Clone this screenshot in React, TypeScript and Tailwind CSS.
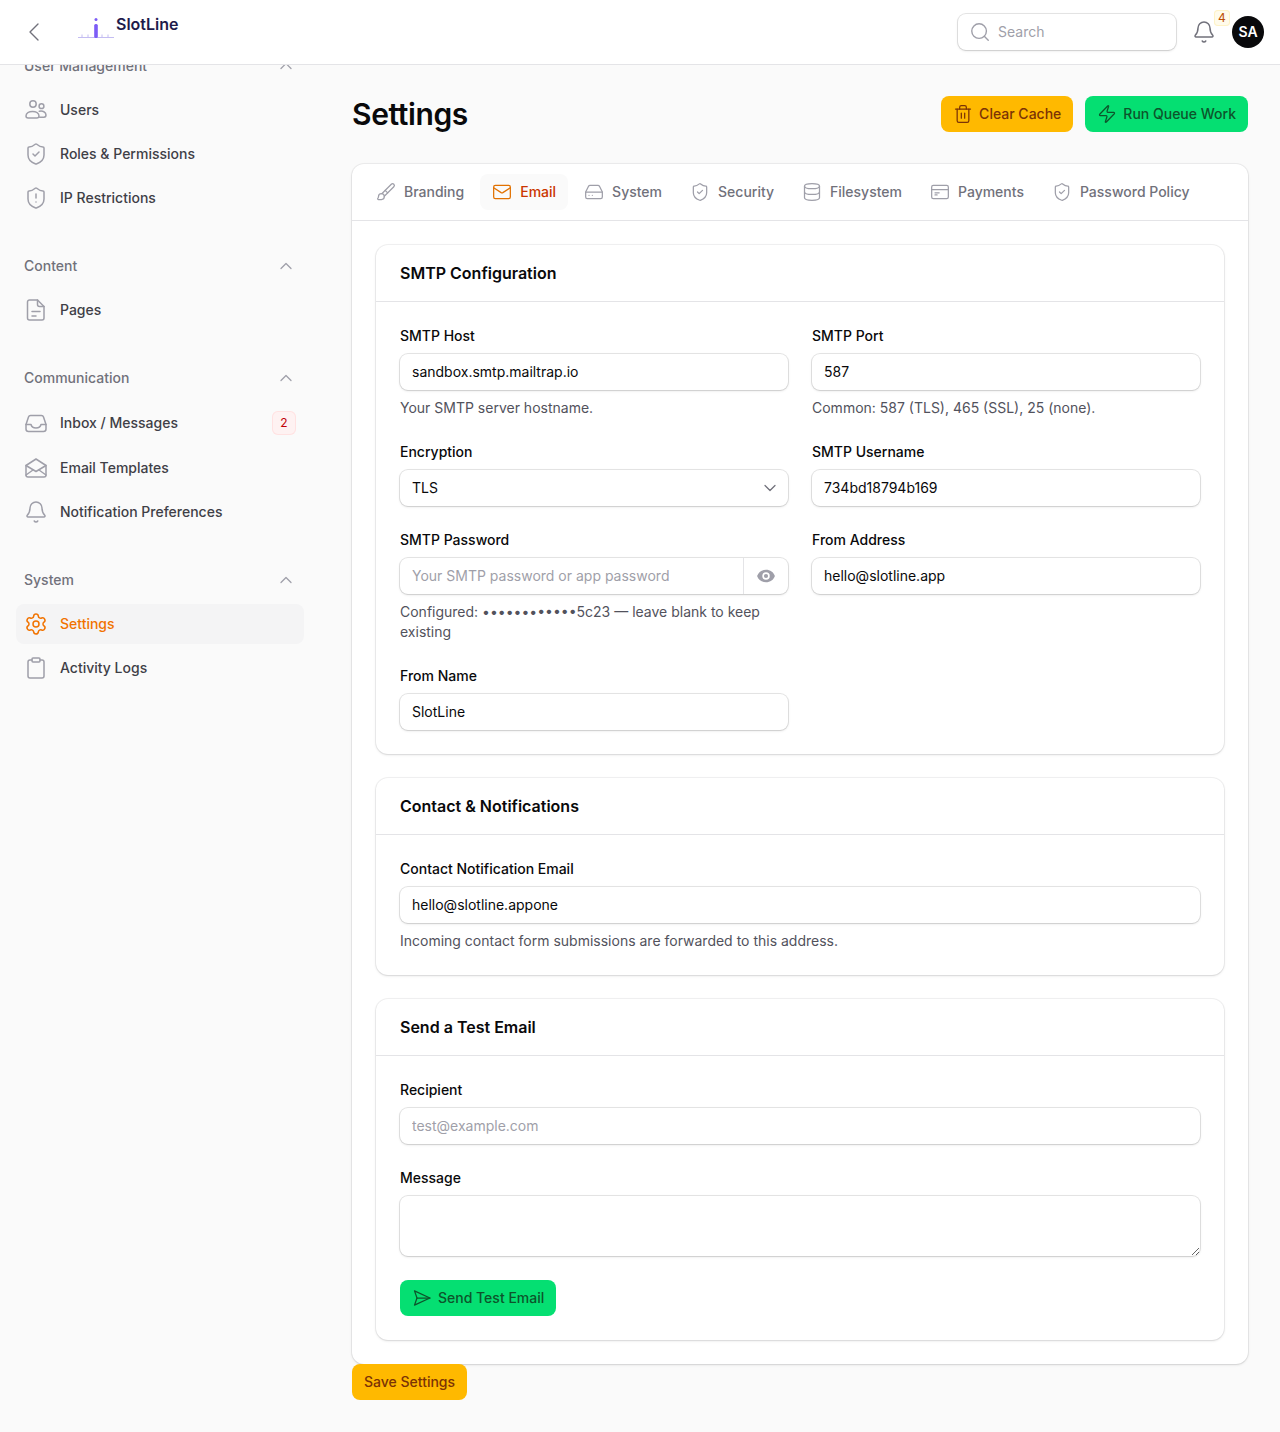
import React from "react";
import {
  Bell, Brush, ChevronDown, ChevronLeft, ChevronUp, Clipboard, Database, HardDrive, Mail, Search, Settings,
  ShieldAlert, ShieldCheck, Trash2, Zap,
} from "lucide-react";

type IconProps = { className?: string };

const Svg = ({ className, children }: IconProps & { children: React.ReactNode }) => (
  <svg viewBox="0 0 24 24" fill="none" stroke="currentColor" strokeWidth={1.5} strokeLinecap="round" strokeLinejoin="round" className={className}>
    {children}
  </svg>
);

const UsersIcon = (p: IconProps) => (
  <Svg {...p}>
    <circle cx="9" cy="6" r="3.2" />
    <circle cx="17.5" cy="8.2" r="2.4" />
    <path d="M2 18c0-2.8 3-4.6 6.5-4.6S15 15.200 15 18c0 1.200-.9 2-2.200 2H4.200C2.900 20 2 19.200 2 18z" />
    <path d="M15.300 13.300c3.300-.8 6.700.7 6.700 3.700 0 1.300-.9 2.200-2.100 2.200h-4.200" />
  </Svg>
);
const FileIcon = (p: IconProps) => (
  <Svg {...p}>
    <path d="M5.500 2h8L20 8.500V20a2 2 0 0 1-2 2H5.500a2 2 0 0 1-2-2V4a2 2 0 0 1 2-2z" />
    <path d="M13.500 2v4.500a2 2 0 0 0 2 2H20" />
    <path d="M8 13.500h8M8 18h4" />
  </Svg>
);
const InboxIcon = (p: IconProps) => (
  <Svg {...p}>
    <path d="M6.500 4.500h11c1 0 1.700.5 2 1.400L22 13.500V18a2.500 2.500 0 0 1-2.500 2.500h-15A2.500 2.500 0 0 1 2 18v-4.500l2.500-7.600c.3-.9 1-1.400 2-1.400z" />
    <path d="M2 13.500h5c.5 2.300 2.300 3.500 5 3.500s4.500-1.200 5-3.500h5" />
  </Svg>
);
const MailOpenIcon = (p: IconProps) => (
  <Svg {...p}>
    <path d="M2 9.500 12 3l10 6.500V19a2 2 0 0 1-2 2H4a2 2 0 0 1-2-2z" />
    <path d="M2 9.500l10 6 10-6" />
    <path d="M2 19l7-5M22 19l-7-5" />
  </Svg>
);
const CardIcon = (p: IconProps) => (
  <Svg {...p}>
    <rect x="2" y="4" width="20" height="16" rx="2" />
    <path d="M2 9h20M6 13h5M6 15.500h2.500" />
  </Svg>
);
const SendIcon = (p: IconProps) => (
  <Svg {...p}>
    <path d="M3 3.500 21.500 12 3 20.500 6 12z" />
    <path d="M6 12h15.500" />
  </Svg>
);
const EyeIcon = (p: IconProps) => (
  <svg viewBox="0 0 24 24" className={p.className} fill="currentColor">
    <path fillRule="evenodd" d="M1.300 12C2.800 7.500 7 4.500 12 4.500S21.200 7.500 22.700 12C21.200 16.500 17 19.500 12 19.500S2.800 16.500 1.300 12zM12 16.500a4.500 4.500 0 1 0 0-9 4.500 4.500 0 0 0 0 9zM12 14.500a2.500 2.500 0 1 1 0-5 2.500 2.500 0 0 1 0 5z" />
  </svg>
);

const Logo = () => (
  <svg viewBox="0 0 36 22" className="h-[22px] w-9" fill="none">
    <path d="M0 20.500h36" stroke="#c4bdf2" strokeWidth="1" />
    <path d="M4 17.500v3M10 17.500v3M24 17.500v3M30 17.500v3" stroke="#c4bdf2" strokeWidth="1" />
    <rect x="16.200" y="7" width="3.600" height="14" rx="1.500" fill="#7c5cf6" />
    <circle cx="18" cy="2.500" r="1.500" fill="#7c5cf6" />
  </svg>
);

const NavItem = ({ icon: Icon, label, active, badge, tall }: { icon: React.ComponentType<IconProps>; label: string; active?: boolean; badge?: string; tall?: boolean }) => (
  <div className={`flex items-center gap-3 rounded-lg pl-2 pr-2 text-sm font-medium ${tall ? "h-[42px]" : "h-10"} ${active ? "bg-zinc-100 text-[#f17300]" : "text-zinc-700"}`}>
    <Icon className={`size-6 shrink-0 ${active ? "text-[#f17300]" : "text-zinc-400"}`} />
    <span className="flex-1">{label}</span>
    {badge && (
      <span className="flex size-6 items-center justify-center rounded-md bg-red-50 text-xs font-normal text-red-700 ring-1 ring-inset ring-red-100">{badge}</span>
    )}
  </div>
);

const NavSection = ({ title, children }: { title: string; children: React.ReactNode }) => (
  <section>
    <div className="mb-3 flex h-6 items-center justify-between pl-2 pr-2 text-sm font-medium text-zinc-500">
      <span>{title}</span>
      <ChevronUp className="size-5 text-zinc-400" strokeWidth={1.5} />
    </div>
    <div className="flex flex-col gap-1">{children}</div>
  </section>
);

const Tab = ({ icon: Icon, label, active }: { icon: React.ComponentType<any>; label: string; active?: boolean }) => (
  <div className={`flex h-9 items-center gap-2 rounded-lg px-3 text-sm font-medium ${active ? "bg-zinc-50 text-[#ca3500]" : "text-zinc-500"}`}>
    <Icon className={`size-5 ${active ? "text-[#e17100]" : "text-zinc-400"}`} strokeWidth={1.5} />
    {label}
  </div>
);

const inputCls =
  "block w-full rounded-lg bg-white px-3 py-2 text-sm text-zinc-950 shadow-sm outline-none ring-1 ring-zinc-950/10 placeholder:text-zinc-400";

const Field = ({ label, children, help }: { label: string; children: React.ReactNode; help?: React.ReactNode }) => (
  <div>
    <label className="block text-sm font-medium text-zinc-950">{label}</label>
    <div className="mt-2">{children}</div>
    {help && <p className="mt-2 text-sm text-zinc-600">{help}</p>}
  </div>
);

const Card = ({ title, children }: { title: string; children: React.ReactNode }) => (
  <section className="rounded-xl bg-white shadow-sm ring-1 ring-zinc-950/5">
    <h2 className="border-b border-zinc-200 px-6 py-4 text-base font-semibold text-zinc-950">{title}</h2>
    <div className="p-6">{children}</div>
  </section>
);

export default function App() {
  return (
    <div className="min-h-[1432px] bg-zinc-50 font-[family-name:Inter,sans-serif]">
      <header className="relative z-10 flex h-[65px] items-center border-b border-zinc-200 bg-white pl-[18px] pr-4">
        <ChevronLeft className="size-8 text-zinc-500" strokeWidth={1} />
        <div className="ml-7 flex items-start self-start pt-[14px]">
          <div className="mt-[3px]"><Logo /></div>
          <span className="ml-[2px] text-base leading-5 font-semibold text-[#1e1b4b]">SlotLine</span>
        </div>
        <div className="ml-auto flex h-9 w-[218px] items-center gap-[7px] rounded-lg bg-white px-[11px] shadow-sm ring-1 ring-zinc-950/10">
          <Search className="size-[22px] text-zinc-400" strokeWidth={1.5} />
          <span className="text-sm text-zinc-400">Search</span>
        </div>
        <div className="relative ml-4">
          <Bell className="size-6 text-zinc-500" strokeWidth={1.5} />
          <span className="absolute -top-[10px] left-[22px] flex size-4 items-center justify-center rounded bg-amber-50 text-xs text-amber-700 ring-1 ring-inset ring-amber-100">4</span>
        </div>
        <div className="ml-4 flex size-8 items-center justify-center rounded-full bg-zinc-950 text-sm font-semibold text-white">SA</div>
      </header>
      <div className="flex">
        <aside className="h-[700px] w-[320px] shrink-0 overflow-hidden">
          <div className="-mt-[11px] flex flex-col gap-9 pl-4 pr-4">
            <NavSection title="User Management">
              <NavItem icon={UsersIcon} label="Users" />
              <NavItem icon={(p) => <ShieldCheck {...p} strokeWidth={1.5} />} label="Roles & Permissions" />
              <NavItem icon={(p) => <ShieldAlert {...p} strokeWidth={1.5} />} label="IP Restrictions" />
            </NavSection>
            <NavSection title="Content">
              <NavItem icon={FileIcon} label="Pages" />
            </NavSection>
            <NavSection title="Communication">
              <NavItem icon={InboxIcon} label="Inbox / Messages" badge="2" tall />
              <NavItem icon={MailOpenIcon} label="Email Templates" />
              <NavItem icon={(p) => <Bell {...p} strokeWidth={1.5} />} label="Notification Preferences" />
            </NavSection>
            <NavSection title="System">
              <NavItem icon={(p) => <Settings {...p} strokeWidth={1.5} />} label="Settings" active />
              <NavItem icon={(p) => <Clipboard {...p} strokeWidth={1.5} />} label="Activity Logs" />
            </NavSection>
          </div>
        </aside>
        <main className="min-w-0 flex-1 pb-8 pl-8 pr-8 pt-[31px]">
          <div className="flex items-center justify-between">
            <h1 className="text-3xl font-semibold tracking-[-0.0125em] text-zinc-950">Settings</h1>
            <div className="flex gap-3">
              <button className="flex h-9 items-center gap-1.5 rounded-lg bg-amber-400 px-3 text-sm font-medium text-amber-900">
                <Trash2 className="size-5" strokeWidth={1.5} />Clear Cache
              </button>
              <button className="flex h-9 items-center gap-1.5 rounded-lg bg-green-400 px-3 text-sm font-medium text-green-900">
                <Zap className="size-5" strokeWidth={1.5} />Run Queue Work
              </button>
            </div>
          </div>
          <div className="mt-8 rounded-xl bg-white shadow-sm ring-1 ring-zinc-950/5">
            <nav className="flex gap-1 border-b border-zinc-200 px-3 py-2.5">
              <Tab icon={Brush} label="Branding" />
              <Tab icon={Mail} label="Email" active />
              <Tab icon={HardDrive} label="System" />
              <Tab icon={ShieldCheck} label="Security" />
              <Tab icon={Database} label="Filesystem" />
              <Tab icon={CardIcon} label="Payments" />
              <Tab icon={ShieldCheck} label="Password Policy" />
            </nav>
            <div className="flex flex-col gap-6 p-6">
              <Card title="SMTP Configuration">
                <div className="grid grid-cols-2 gap-x-6 gap-y-6">
                  <Field label="SMTP Host" help="Your SMTP server hostname.">
                    <input className={inputCls} defaultValue="sandbox.smtp.mailtrap.io" />
                  </Field>
                  <Field label="SMTP Port" help="Common: 587 (TLS), 465 (SSL), 25 (none).">
                    <input className={inputCls} defaultValue="587" />
                  </Field>
                  <Field label="Encryption">
                    <div className="relative">
                      <select className={`${inputCls} appearance-none`} defaultValue="TLS">
                        <option>TLS</option>
                      </select>
                      <ChevronDown className="pointer-events-none absolute right-2 top-2 size-5 text-zinc-500" strokeWidth={1.5} />
                    </div>
                  </Field>
                  <Field label="SMTP Username">
                    <input className={inputCls} defaultValue="734bd18794b169" />
                  </Field>
                  <Field label="SMTP Password" help="Configured: ••••••••••••5c23 — leave blank to keep existing">
                    <div className="flex h-9 rounded-lg bg-white shadow-sm ring-1 ring-zinc-950/10">
                      <input className="min-w-0 flex-1 bg-transparent px-3 text-sm outline-none placeholder:text-zinc-400" placeholder="Your SMTP password or app password" />
                      <div className="flex w-[45px] items-center justify-center border-l border-zinc-200">
                        <EyeIcon className="size-5 text-zinc-400" />
                      </div>
                    </div>
                  </Field>
                  <Field label="From Address">
                    <input className={inputCls} defaultValue="hello@slotline.app" />
                  </Field>
                  <Field label="From Name">
                    <input className={inputCls} defaultValue="SlotLine" />
                  </Field>
                </div>
              </Card>
              <Card title="Contact & Notifications">
                <Field label="Contact Notification Email" help="Incoming contact form submissions are forwarded to this address.">
                  <input className={inputCls} defaultValue="hello@slotline.appone" />
                </Field>
              </Card>
              <Card title="Send a Test Email">
                <div className="flex flex-col gap-6">
                  <Field label="Recipient">
                    <input className={inputCls} placeholder="test@example.com" />
                  </Field>
                  <Field label="Message">
                    <textarea className="block h-[60px] w-full rounded-lg bg-white px-3 py-2 text-sm shadow-sm outline-none ring-1 ring-zinc-950/10" />
                  </Field>
                  <div>
                    <button className="flex h-9 items-center gap-1.5 rounded-lg bg-green-400 px-3 text-sm font-medium text-green-900">
                      <SendIcon className="size-5" />Send Test Email
                    </button>
                  </div>
                </div>
              </Card>
            </div>
          </div>
          <button className="block h-9 rounded-lg bg-amber-400 px-3 text-sm font-medium text-amber-900">Save Settings</button>
        </main>
      </div>
    </div>
  );
}
